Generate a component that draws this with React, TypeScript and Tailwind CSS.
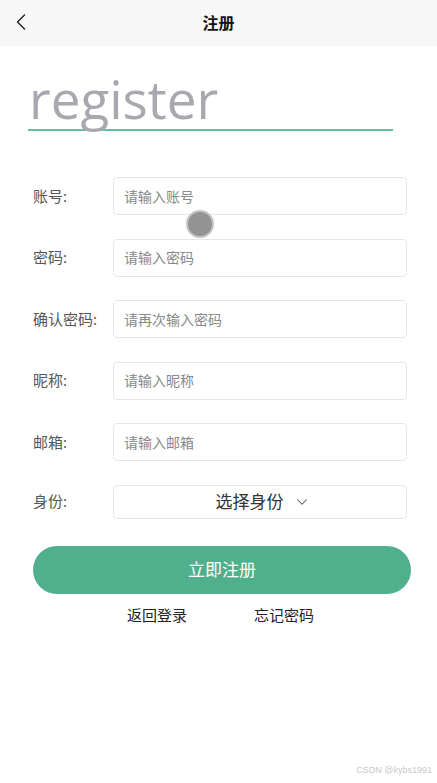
import { ChevronDown, ChevronLeft } from 'lucide-react';

const fields = [
  { label: '账号:', placeholder: '请输入账号' },
  { label: '密码:', placeholder: '请输入密码' },
  { label: '确认密码:', placeholder: '请再次输入密码' },
  { label: '昵称:', placeholder: '请输入昵称' },
  { label: '邮箱:', placeholder: '请输入邮箱' },
];

export default function App() {
  return (
    <div
      className="relative w-[437px] h-[783px] bg-white overflow-hidden"
      style={{ fontFamily: '"Noto Sans", "Noto Sans CJK SC", sans-serif' }}
    >
      {/* header */}
      <div className="relative h-[46px] bg-[#f7f7f7] flex items-center justify-center">
        <ChevronLeft className="absolute left-[7px] top-[8px] w-[28px] h-[28px] text-[#222]" strokeWidth={1.2} />
        <span className="text-[16px] font-bold text-[#111]">注册</span>
      </div>

      {/* title */}
      <div className="px-[28px] pt-[22px]">
        <div
          className="text-[53px] leading-[62px] text-[#a9a8b0] pl-[1px]"
          style={{ fontFamily: '"Open Sans", sans-serif' }}
        >
          register
        </div>
        <div className="w-[365px] h-[2px] bg-[#6cbca1] -mt-[1px]" />
      </div>

      {/* form */}
      <div className="flex flex-col gap-[23.5px] mt-[46px] pl-[33px] pr-[30px]">
        {fields.map((f) => (
          <div key={f.label} className="flex items-center">
            <div className="w-[80px] text-[15px] text-[#555]">{f.label}</div>
            <div className="flex-1 h-[38px] border border-[#e6e6e6] rounded-[4px] flex items-center px-[10px] text-[14px] text-[#888]">
              {f.placeholder}
            </div>
          </div>
        ))}
        <div className="flex items-center">
          <div className="w-[80px] text-[15px] text-[#555]">身份:</div>
          <div className="flex-1 h-[34px] border border-[#e6e6e6] rounded-[4px] flex items-center justify-center gap-[9px] text-[17px] text-[#333] pl-[6px]">
            <span>选择身份</span>
            <ChevronDown className="w-[18px] h-[18px] text-[#555]" strokeWidth={1.4} />
          </div>
        </div>
      </div>

      {/* submit */}
      <div className="px-[33px] pr-[26px] mt-[27px]">
        <button className="w-full h-[48px] rounded-full bg-[#50b08d] text-white text-[17px]">立即注册</button>
      </div>
      <div className="flex justify-center gap-[67px] mt-[10px] text-[15px] text-[#222] pl-[4px]">
        <span>返回登录</span>
        <span>忘记密码</span>
      </div>

      {/* touch indicator */}
      <div className="absolute left-[186px] top-[210px] w-[28px] h-[28px] rounded-full bg-[#939393] border-[2px] border-[#c4c4c4]" />

      {/* watermark */}
      <div
        className="absolute right-[5px] bottom-[6px] text-[9px] text-[#c8c8c8]"
        style={{ fontFamily: '"Liberation Sans", sans-serif' }}
      >
        CSDN @kybs1991
      </div>
    </div>
  );
}
